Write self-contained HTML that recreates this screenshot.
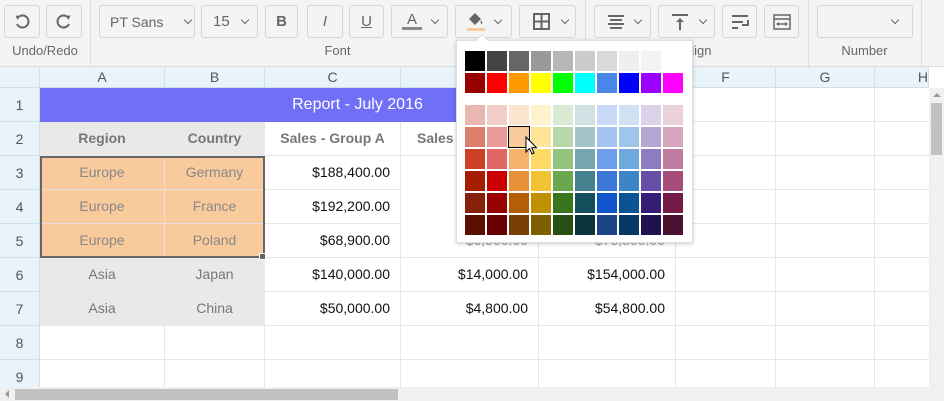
<!DOCTYPE html>
<html><head><meta charset="utf-8">
<style>
*{box-sizing:border-box;margin:0;padding:0}
body{width:944px;height:401px;overflow:hidden;background:#fff;font-family:"Liberation Sans",sans-serif;position:relative}
.a{position:absolute}
.tb{left:0;top:0;width:944px;height:67px;background:#f4f4f4;border-bottom:1px solid #ddd}
.btn{position:absolute;top:5px;height:33px;border:1px solid #d6d6d6;border-radius:3px;background:#f4f4f4;color:#666;font-size:15px;display:flex;align-items:center;justify-content:center;white-space:nowrap}
.sep{position:absolute;top:0;width:1px;height:66px;background:#ddd}
.lbl{position:absolute;top:43px;font-size:13px;color:#666;text-align:center}
.chev{display:inline-block;width:6px;height:6px;border-right:1.5px solid #667;border-bottom:1.5px solid #667;transform:rotate(45deg);margin-top:-4px}
.ch{top:67px;height:21px;background:#e8f3fa;border-right:1px solid #cfe0ec;border-bottom:1px solid #cfe0ec;font-size:14px;color:#555;text-align:center;line-height:21px}
.rh{left:0;width:40px;height:34px;background:#e8f3fa;border-bottom:1px solid #cfe0ec;border-right:1px solid #cfe0ec;font-size:14px;color:#555;text-align:center;line-height:34px}
.c{height:34px;border-right:1px solid #e6e6e6;border-bottom:1px solid #e6e6e6;font-size:14px;line-height:33px;padding:0 10px;white-space:nowrap}
.g{background:#e9e9e9;color:#777;text-align:center;border-color:#e9e9e9}
.o{background:#f9cb9c;color:#888;text-align:center;border-color:#e6e0e0}
.h{font-weight:bold;color:#777;text-align:center}
.r{text-align:right;color:#111}
.pal{left:456px;top:40px;width:237px;height:203px;background:#fff;border:1px solid #ddd;box-shadow:0 1px 4px rgba(0,0,0,.2)}
.sw{position:absolute;width:20px;height:20px}
</style></head><body>
<div class="a tb"></div>
<div class="btn" style="left:4px;width:36px"><svg width="16" height="16" viewBox="0 0 16 16"><path d="M4 3.5 A6 6 0 1 1 3 10" fill="none" stroke="#666" stroke-width="2"/><path d="M1.5 1.5 L6 2 L3.5 6 Z" fill="#666"/></svg></div>
<div class="btn" style="left:46px;width:36px"><svg width="16" height="16" viewBox="0 0 16 16"><path d="M12 3.5 A6 6 0 1 0 13 10" fill="none" stroke="#666" stroke-width="2"/><path d="M14.5 1.5 L10 2 L12.5 6 Z" fill="#666"/></svg></div>
<div class="sep" style="left:90px"></div>
<div class="lbl" style="left:0;width:90px">Undo/Redo</div>
<div class="btn" style="left:99px;width:96px;justify-content:flex-start;padding-left:10px;font-size:14px">PT Sans<span class="chev" style="margin-left:22px"></span></div>
<div class="btn" style="left:201px;width:57px;justify-content:flex-start;padding-left:11px">15<span class="chev" style="margin-left:12px"></span></div>
<div class="btn" style="left:265px;width:33px;font-weight:bold">B</div>
<div class="btn" style="left:307px;width:36px;font-style:italic">I</div>
<div class="btn" style="left:349px;width:35px;text-decoration:underline">U</div>
<div class="btn" style="left:391px;width:57px;justify-content:flex-start;padding-left:10px"><span style="display:inline-block;border-bottom:3px solid #888;line-height:14px;width:20px;text-align:center">A</span><span class="chev" style="margin-left:10px"></span></div>
<div class="btn" style="left:455px;width:57px;justify-content:flex-start;padding-left:11px"><span style="display:inline-block;width:18px;height:20px;position:relative"><svg width="18" height="15" viewBox="0 0 18 15"><path d="M2 7 L8 1 L14 7 L8 13 Z" fill="#666"/><path d="M14 8 Q16 11 15 12 Q13 12 14 8Z" fill="#666"/></svg><span class="a" style="left:0;top:16px;width:18px;height:3px;background:#f9cb9c"></span></span><span class="chev" style="margin-left:10px"></span></div>
<div class="btn" style="left:519px;width:57px;justify-content:flex-start;padding-left:13px"><svg width="17" height="17" viewBox="0 0 17 17"><rect x="1" y="1" width="15" height="15" fill="none" stroke="#666" stroke-width="2"/><path d="M8.5 1V16M1 8.5H16" stroke="#666" stroke-width="2"/></svg><span class="chev" style="margin-left:12px"></span></div>
<div class="sep" style="left:585px"></div>
<div class="btn" style="left:594px;width:57px;justify-content:flex-start;padding-left:12px"><svg width="18" height="14" viewBox="0 0 18 14"><path d="M1 1H17M3 5H15M1 9H17M3 13H15" stroke="#666" stroke-width="2"/></svg><span class="chev" style="margin-left:10px"></span></div>
<div class="btn" style="left:658px;width:57px;justify-content:flex-start;padding-left:12px"><svg width="18" height="16" viewBox="0 0 18 16"><path d="M1 1H17M9 5V16" stroke="#666" stroke-width="2"/><path d="M5 8 L9 4 L13 8Z" fill="#666"/></svg><span class="chev" style="margin-left:11px"></span></div>
<div class="btn" style="left:722px;width:35px"><svg width="18" height="14" viewBox="0 0 18 14"><path d="M1 1H17M1 7H12M1 13H7M17 5V10H11" stroke="#666" stroke-width="2" fill="none"/></svg></div>
<div class="btn" style="left:764px;width:35px"><svg width="18" height="16" viewBox="0 0 18 16"><rect x="1" y="1" width="16" height="14" fill="none" stroke="#666" stroke-width="1.5"/><path d="M1 5H17M4 10H14" stroke="#666" stroke-width="1.5"/><path d="M3 10L6 8V12ZM15 10L12 8V12Z" fill="#666"/></svg></div>
<div class="lbl" style="left:586px;width:222px">Align</div>
<div class="sep" style="left:808px"></div>
<div class="btn" style="left:817px;width:96px;justify-content:flex-end;padding-right:14px"><span class="chev"></span></div>
<div class="lbl" style="left:808px;width:113px">Number</div>
<div class="sep" style="left:921px"></div>
<div class="lbl" style="left:90px;width:495px">Font</div>

<div class="a ch" style="left:0;width:40px"></div>
<div class="a ch" style="left:40px;width:125px">A</div>
<div class="a ch" style="left:165px;width:100px">B</div>
<div class="a ch" style="left:265px;width:136px">C</div>
<div class="a ch" style="left:401px;width:138px">D</div>
<div class="a ch" style="left:539px;width:137px">E</div>
<div class="a ch" style="left:676px;width:100px">F</div>
<div class="a ch" style="left:776px;width:99px">G</div>
<div class="a ch" style="left:875px;width:54px;text-align:right;padding-right:0">H</div>

<div class="a rh" style="top:88px">1</div>
<div class="a rh" style="top:122px">2</div>
<div class="a rh" style="top:156px">3</div>
<div class="a rh" style="top:190px">4</div>
<div class="a rh" style="top:224px">5</div>
<div class="a rh" style="top:258px">6</div>
<div class="a rh" style="top:292px">7</div>
<div class="a rh" style="top:326px">8</div>
<div class="a rh" style="top:360px">9</div>

<!-- empty grid lines -->
<div class="a" style="left:40px;top:325px;width:889px;height:1px;background:#e6e6e6"></div>
<div class="a" style="left:40px;top:359px;width:889px;height:1px;background:#e6e6e6"></div>
<div class="a" style="left:164px;top:326px;width:1px;height:61px;background:#e6e6e6"></div>
<div class="a" style="left:264px;top:292px;width:1px;height:95px;background:#e6e6e6"></div>
<div class="a" style="left:400px;top:122px;width:1px;height:265px;background:#e6e6e6"></div>
<div class="a" style="left:538px;top:122px;width:1px;height:265px;background:#e6e6e6"></div>
<div class="a" style="left:675px;top:88px;width:1px;height:299px;background:#e6e6e6"></div>
<div class="a" style="left:775px;top:88px;width:1px;height:299px;background:#e6e6e6"></div>
<div class="a" style="left:874px;top:88px;width:1px;height:299px;background:#e6e6e6"></div>
<div class="a" style="left:676px;top:155px;width:253px;height:1px;background:#e6e6e6"></div>
<div class="a" style="left:676px;top:189px;width:253px;height:1px;background:#e6e6e6"></div>
<div class="a" style="left:676px;top:223px;width:253px;height:1px;background:#e6e6e6"></div>
<div class="a" style="left:676px;top:257px;width:253px;height:1px;background:#e6e6e6"></div>
<div class="a" style="left:676px;top:291px;width:253px;height:1px;background:#e6e6e6"></div>
<div class="a" style="left:676px;top:121px;width:253px;height:1px;background:#e6e6e6"></div>

<div class="a" style="left:40px;top:88px;width:635px;height:34px;background:#6f6ff8;color:#fff;font-size:16px;line-height:34px;text-align:center">Report - July 2016</div>

<!-- row 2 -->
<div class="a c g h" style="left:40px;top:122px;width:125px">Region</div>
<div class="a c g h" style="left:165px;top:122px;width:100px">Country</div>
<div class="a c h" style="left:265px;top:122px;width:136px">Sales - Group A</div>
<div class="a c h" style="left:401px;top:122px;width:138px">Sales - Group B</div>
<div class="a c h" style="left:539px;top:122px;width:137px">Total</div>

<div class="a c o" style="left:40px;top:156px;width:125px">Europe</div>
<div class="a c o" style="left:165px;top:156px;width:100px">Germany</div>
<div class="a c r" style="left:265px;top:156px;width:136px">$188,400.00</div>
<div class="a c o" style="left:40px;top:190px;width:125px">Europe</div>
<div class="a c o" style="left:165px;top:190px;width:100px">France</div>
<div class="a c r" style="left:265px;top:190px;width:136px">$192,200.00</div>
<div class="a c o" style="left:40px;top:224px;width:125px">Europe</div>
<div class="a c o" style="left:165px;top:224px;width:100px">Poland</div>
<div class="a c r" style="left:265px;top:224px;width:136px">$68,900.00</div>
<div class="a c r" style="left:401px;top:224px;width:138px;color:#999">$6,900.00</div>
<div class="a c r" style="left:539px;top:224px;width:137px;color:#999">$75,800.00</div>

<div class="a c g" style="left:40px;top:258px;width:125px">Asia</div>
<div class="a c g" style="left:165px;top:258px;width:100px">Japan</div>
<div class="a c r" style="left:265px;top:258px;width:136px">$140,000.00</div>
<div class="a c r" style="left:401px;top:258px;width:138px">$14,000.00</div>
<div class="a c r" style="left:539px;top:258px;width:137px">$154,000.00</div>
<div class="a c g" style="left:40px;top:292px;width:125px">Asia</div>
<div class="a c g" style="left:165px;top:292px;width:100px">China</div>
<div class="a c r" style="left:265px;top:292px;width:136px">$50,000.00</div>
<div class="a c r" style="left:401px;top:292px;width:138px">$4,800.00</div>
<div class="a c r" style="left:539px;top:292px;width:137px">$54,800.00</div>

<!-- selection -->
<div class="a" style="left:40px;top:156px;width:225px;height:102px;border:2px solid #666"></div>
<div class="a" style="left:259px;top:253px;width:7px;height:7px;background:#666;border:1px solid #fff"></div>

<!-- scrollbars -->
<div class="a" style="left:929px;top:88px;width:15px;height:299px;background:#f0f0f0"></div>
<div class="a" style="left:931px;top:103px;width:11px;height:52px;background:#c1c1c1"></div>
<div class="a" style="left:933px;top:93px;width:0;height:0;border-left:4px solid transparent;border-right:4px solid transparent;border-bottom:4px solid #999"></div>
<div class="a" style="left:0;top:387px;width:944px;height:14px;background:#f0f0f0"></div>
<div class="a" style="left:15px;top:389px;width:383px;height:11px;background:#c1c1c1"></div>
<div class="a" style="left:5px;top:390px;width:0;height:0;border-top:4px solid transparent;border-bottom:4px solid transparent;border-right:4px solid #999"></div>

<!-- palette -->
<div class="a pal" id="pal"></div>
<div class="a" style="left:477px;top:36px;width:10px;height:10px;background:#fff;border-left:1px solid #ddd;border-top:1px solid #ddd;transform:rotate(45deg)"></div>
<script>
var rows=[
["#000000","#434343","#666666","#999999","#b7b7b7","#cccccc","#d9d9d9","#efefef","#f3f3f3","#ffffff"],
["#980000","#ff0000","#ff9900","#ffff00","#00ff00","#00ffff","#4a86e8","#0000ff","#9900ff","#ff00ff"],
["#e6b8af","#f4cccc","#fce5cd","#fff2cc","#d9ead3","#d0e0e3","#c9daf8","#cfe2f3","#d9d2e9","#ead1dc"],
["#dd7e6b","#ea9999","#f9cb9c","#ffe599","#b6d7a8","#a2c4c9","#a4c2f4","#9fc5e8","#b4a7d6","#d5a6bd"],
["#cc4125","#e06666","#f6b26b","#ffd966","#93c47d","#76a5af","#6d9eeb","#6fa8dc","#8e7cc3","#c27ba0"],
["#a61c00","#cc0000","#e69138","#f1c232","#6aa84f","#45818e","#3c78d8","#3d85c6","#674ea7","#a64d79"],
["#85200c","#990000","#b45f06","#bf9000","#38761d","#134f5c","#1155cc","#0b5394","#351c75","#741b47"],
["#5b0f00","#660000","#783f04","#7f6000","#274e13","#0c343d","#1c4587","#073763","#20124d","#4c1130"]];
var ys=[10,32,64,86,108,130,152,174],h="";
for(var r=0;r<8;r++)for(var c=0;c<10;c++){
var st="left:"+(8+c*22)+"px;top:"+ys[r]+"px;background:"+rows[r][c];
if(r==3&&c==2)st+=";outline:1px solid #000;outline-offset:0";
h+='<div class="sw" style="'+st+'"></div>';}
h+='<svg class="a" style="left:68px;top:95px" width="14" height="20" viewBox="0 0 14 20"><path d="M1 1V16L4.5 12.5L7 18L9 17L6.8 11.8H11.5Z" fill="#fff" stroke="#000" stroke-width="1"/></svg>';
document.getElementById("pal").innerHTML=h;
</script>
</body></html>
